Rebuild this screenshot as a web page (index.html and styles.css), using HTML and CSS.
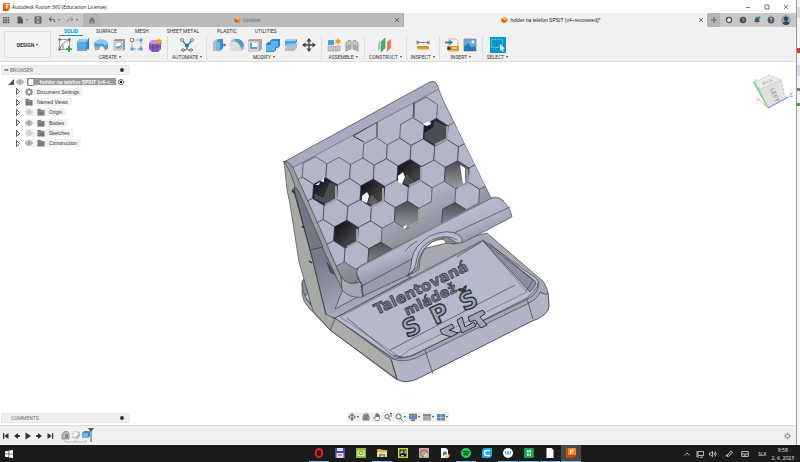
FILE: index.html
```html
<!DOCTYPE html>
<html lang="en">
<head>
    <meta charset="UTF-8">
    <meta name="viewport" content="width=device-width, initial-scale=1.0">
    <title>Autodesk Fusion 360 (Education License)</title>
    <link rel="stylesheet" href="styles.css">
</head>
<body>
    <div class="desktop">
        <div class="app">
            <header class="titlebar">
                <svg class="app-logo" viewBox="0 0 7 8"><path d="M0 1l1-1h5v7l-1 1H0z" fill="#d9480f"/><path d="M1 0h6v6H1z" fill="#f47b20"/><path d="M3 1.500h3M3.500 1.500v4M3 3.300h2" stroke="#fff" fill="none"/></svg>
                <h1>Autodesk Fusion 360 (Education License)</h1>
                <div class="window-buttons">
                    <button aria-label="Minimize"><svg viewBox="0 0 6 6"><path d="M1 3.500h4"/></svg></button>
                    <button aria-label="Maximize"><svg viewBox="0 0 6 6"><path d="M1 1h4v4H1z"/></svg></button>
                    <button aria-label="Close"><svg viewBox="0 0 6 6"><path d="M1 1l4 4M5 1L1 5"/></svg></button>
                </div>
            </header>

            <!-- Quick access and document tabs -->
            <nav class="doc-bar">
                <div class="quick">
                    <button aria-label="Data panel"><svg viewBox="0 0 8 8" fill="#555"><path d="M1 1h1.600v1.600H1zM3.300 1h1.600v1.600H3.300zM5.600 1h1.600v1.600H5.600zM1 3.300h1.600v1.600H1zM3.300 3.300h1.600v1.600H3.300zM5.600 3.300h1.600v1.600H5.600zM1 5.600h1.600v1.600H1zM3.300 5.600h1.600v1.600H3.300zM5.600 5.600h1.600v1.600H5.600z"/></svg></button>
                    <button class="drop" aria-label="File"><svg viewBox="0 0 8 8"><path d="M1.500.5H5L7 2.500v5H1.500z" fill="#555"/><path d="M5 .5v2h2" stroke="#bbb" stroke-width=".5" fill="none"/></svg></button>
                    <button aria-label="Save"><svg viewBox="0 0 8 8"><path d="M1 1h6v6H1z" fill="#888" stroke="#555"/><path d="M2.500 1h3v2h-3zM2.500 5h3v2h-3z" fill="#ccc" stroke="#555" stroke-width=".5"/></svg></button>
                    <button class="drop" aria-label="Undo"><svg viewBox="0 0 8 8"><path d="M3.500 1L1 3.300l2.500 2.200M1 3.300h3.500q2.500 0 2.500 3" fill="none" stroke="#555"/></svg></button>
                    <button class="drop" aria-label="Redo"><svg viewBox="0 0 8 8"><path d="M4.500 1L7 3.300 4.500 5.500M7 3.300H3.500Q1 3.300 1 6.300" fill="none" stroke="#888" stroke-width=".8"/></svg></button>
                </div>
                <a class="home" href="#" aria-label="Home"><svg viewBox="0 0 8 8"><path d="M4 1L.5 4.500h1V7.500h2V5h1v2.500h2v-3h1z" fill="#777"/></svg></a>
                <div class="doc-tab">
                    <a href="#"><svg viewBox="0 0 8 8"><path d="M4 .5l3.400 1.700v3.600L4 7.500.6 5.800V2.200z" fill="#f58220"/><path d="M.6 2.200L4 4v3.500L.6 5.800z" fill="#d95e0b"/><path d="M.6 2.200L4 .5l3.400 1.700L4 4z" fill="#ffb071"/></svg>Untitled</a>
                    <button aria-label="Close tab"><svg viewBox="0 0 6 6"><path d="M1 1l4 4M5 1L1 5"/></svg></button>
                </div>
                <div class="doc-tab current">
                    <a href="#"><svg viewBox="0 0 8 8"><path d="M4 .5l3.400 1.700v3.600L4 7.500.6 5.800V2.200z" fill="#f58220"/><path d="M.6 2.200L4 4v3.500L.6 5.800z" fill="#d95e0b"/><path d="M.6 2.200L4 .5l3.400 1.700L4 4z" fill="#ffb071"/></svg>holder na telefon SPSIT (v4~recovered)*</a>
                    <button aria-label="Close tab"><svg viewBox="0 0 6 6"><path d="M1 1l4 4M5 1L1 5"/></svg></button>
                </div>
                <button class="add-tab" aria-label="New design"><svg viewBox="0 0 8 8"><path d="M4 1v6M1 4h6" stroke="#666"/></svg></button>
                <div class="doc-tools">
                    <button aria-label="Extensions"><svg viewBox="0 0 8 8"><circle cx="4" cy="4" r="2.600" fill="#eee" stroke="#555" stroke-width="1.200"/><path d="M1 1.500l2.500.3-1.500 2z" fill="#555"/></svg></button>
                    <button aria-label="Job status"><svg viewBox="0 0 8 8"><circle cx="4" cy="4" r="3.300" fill="#555"/><path d="M4 2v2.300h1.600" fill="none" stroke="#bbb" stroke-width=".7"/></svg></button>
                    <button aria-label="Notifications"><svg viewBox="0 0 8 8"><path d="M1 6q1-1 1-3 .3-2 2-2 1.800 0 2 2 0 2 1 3zM3 6.500h2L4 7.500z" fill="#555"/><circle cx="6" cy="1.800" r="1.500" fill="#1792d2"/></svg></button>
                    <button aria-label="Help"><svg viewBox="0 0 8 8"><circle cx="4" cy="4" r="3.400" fill="#555"/><path d="M2.900 3.100Q3 2 4 2t1.100 1Q5.100 3.600 4 4.200v.6M4 5.300v.8" fill="none" stroke="#eee" stroke-width=".8"/></svg></button>
                    <button aria-label="Account"><svg viewBox="0 0 10 10"><circle cx="5" cy="5" r="5" fill="#91a8c4"/><circle cx="5" cy="3.800" r="2.300" fill="#34415a"/><path d="M1.500 8.500Q2 6.500 5 6.300t3.500 2.200Q5 11.500 1.500 8.500z" fill="#34415a"/></svg></button>
                </div>
            </nav>

            <!-- Ribbon -->
            <section class="ribbon">
                <button class="workspace drop">DESIGN</button>
                <div class="ribbon-main">
                    <nav class="ribbon-tabs">
                        <a class="active" href="#">SOLID</a>
                        <a href="#">SURFACE</a>
                        <a href="#">MESH</a>
                        <a href="#">SHEET METAL</a>
                        <a href="#">PLASTIC</a>
                        <a href="#">UTILITIES</a>
                    </nav>
                    <div class="groups">
                        <div class="group">
                            <div class="tools">
                                <button aria-label="Create sketch"><svg viewBox="0 0 14 14"><path d="M1.500 1.500h10v10h-10z" fill="#fff" stroke="#777" stroke-width=".7"/><path d="M2 11Q3 5 11 2M5 11V6.500" fill="none" stroke="#777"/><path d="M.5.5h2v2h-2zM10.500.5h2v2h-2zM.5 10.500h2v2h-2z" fill="#555"/><path d="M11 8v6M8 11h6" stroke="#16a34a" stroke-width="1.700"/></svg></button>
                                <button aria-label="Extrude"><svg viewBox="0 0 14 14"><path d="M1 4l3-3h9v9l-3 3H1z" fill="#3a8fd1"/><path d="M1 4h9v9H1z" fill="#5ba9e4"/><path d="M1 4l3-3h9l-3 3z" fill="#8fcaf3"/><path d="M1 11.500h9v1.500H1z" fill="#999"/><path d="M12.500 0v12" stroke="#555" stroke-width=".5"/></svg></button>
                                <button aria-label="Revolve"><svg viewBox="0 0 14 14"><path d="M0 5q3-4 8-3.500 5 .5 6 4v5l-3 2q-1-5-5-4l-1 3.500H1z" fill="#4a9cda"/><path d="M0 5q3-4 8-3.500 5 .5 6 4l-2.500 2Q9 4.500 5.500 6z" fill="#8cc8f2"/><path d="M1 9l4-.8v3.600l-4 1z" fill="#aaa"/></svg></button>
                                <button aria-label="Hole"><svg viewBox="0 0 14 14"><path d="M1 3l2-2h10v10l-2 2H1z" fill="#999"/><path d="M1 3h10v10H1z" fill="#d5d5d5"/><circle cx="6.500" cy="7.500" r="3.700" fill="#fff" stroke="#888" stroke-width=".7"/><path d="M3.500 8.500a3.200 3.200 0 105.500-3.200q.5 3.700-5.500 3.200z" fill="#4d9fdb"/></svg></button>
                                <button aria-label="Rectangular pattern"><svg viewBox="0 0 14 14"><path d="M2 2h9M2 2v9M11 3v8M3 11h8" stroke="#777" stroke-width=".7" stroke-dasharray="3 1"/><path d="M.5.5h3v3h-3z" fill="#fff" stroke="#555" stroke-width=".6"/><path d="M9.500.5h3v3h-3zM.5 9.500h3v3h-3zM9.500 9.500h3v3h-3z" fill="#4d9fdb"/></svg></button>
                                <button aria-label="Create form"><svg viewBox="0 0 14 14"><path d="M1 5l3-3h7l2 3v6l-3 3H4l-3-3z" fill="#8a5bc4"/><path d="M1 5l3-3h6l2 2-3 2H2z" fill="#b694e2"/><path d="M1 9h8l4-1M5 5.500V13M9 5.500V13" stroke="#56318a" stroke-width=".6" fill="none"/><path d="M11 0l1 2 2.500-.5L13 3.500l1.500 2L12 5l-1 2-1-2-2.500.5 1.500-2-1.500-2 2.500.5z" fill="#f59a1d"/></svg></button>
                            </div>
                            <button class="label drop">CREATE</button>
                        </div>
                        <div class="group">
                            <div class="tools">
                                <button aria-label="Automated modeling"><svg viewBox="0 0 14 14"><path d="M2 2l5 6 5-6M7 8v4M1 12h5M13 12H8" stroke="#4d8fc4" stroke-width="1.500" fill="none"/><g fill="#fff" stroke="#555" stroke-width=".8"><circle cx="2" cy="2" r="1.500"/><circle cx="12" cy="2" r="1.500"/><circle cx="3" cy="12" r="1.300"/><circle cx="11" cy="12" r="1.300"/></g><circle cx="7" cy="7.500" r="2" fill="#277ab8"/></svg></button>
                            </div>
                            <button class="label drop">AUTOMATE</button>
                        </div>
                        <div class="group">
                            <div class="tools">
                                <button aria-label="Press pull"><svg viewBox="0 0 14 14"><path d="M1 4l3-3h3v9l-3 3H1z" fill="#bbb"/><path d="M4 4l3-3h4v9l-3 3H4z" fill="#3a8fd1"/><path d="M4 4h4v9H4z" fill="#73b9eb"/><path d="M10 7h3M12 5.500L13.500 7 12 8.500" stroke="#444" fill="none"/></svg></button>
                                <button aria-label="Fillet"><svg viewBox="0 0 14 14"><path d="M0 4l3-3h5q6 2 6 8v2l-3 2H0z" fill="#b8b8b8"/><path d="M0 4h5q5 2 6 7v2H0z" fill="#dcdcdc"/><path d="M5 1h4q5 2 5 7l-3 2Q10 5 5 3z" fill="#4d9fdb"/></svg></button>
                                <button aria-label="Shell"><svg viewBox="0 0 14 14"><path d="M0 3l2-2h12v10l-2 2H0z" fill="#aaa"/><path d="M0 3h11v10H0z" fill="#ddd" stroke="#888" stroke-width=".5"/><path d="M2 5h7v6H2z" fill="#4d9fdb"/><path d="M4 5h5v4H4z" fill="#fff"/></svg></button>
                                <button aria-label="Combine"><svg viewBox="0 0 14 14"><path d="M4 3l2-2h8v7l-2 2h-2v2l-2 2H0V6l2-2h2z" fill="#3486c7"/><path d="M5 3h7v6H9v4H0V7h5z" fill="#68b1e8"/></svg></button>
                                <button aria-label="Split body"><svg viewBox="0 0 14 14"><path d="M1 3l2-2h10v3l-2 3H1z" fill="#4d9fdb"/><path d="M1 3l2-2h10l-2 2z" fill="#9ed1f5"/><path d="M1 10l3-3h9v3l-3 3H1z" fill="#bbb"/><path d="M0 8.500L4 5.500h10l-3 3z" fill="#8bc6f1"/></svg></button>
                                <button aria-label="Move"><svg viewBox="0 0 14 14"><path d="M7 1v12M1 7h12" stroke="#444" stroke-width="1.300"/><path d="M7 0l2.500 3.500h-5zM7 14l2.500-3.500h-5zM0 7l3.500 2.500v-5zM14 7l-3.500 2.500v-5z" fill="#444"/></svg></button>
                            </div>
                            <button class="label drop">MODIFY</button>
                        </div>
                        <div class="group">
                            <div class="tools">
                                <button aria-label="New component"><svg viewBox="0 0 14 14"><path d="M1 2h6v5H1z" fill="#4d9fdb"/><path d="M1 8h6v5H1zM8 8h5v5H8z" fill="#c4c4c4" stroke="#888" stroke-width=".5"/><path d="M11 0l1 2 2-.5L13 3.500l1 2L12 5l-1 2-1-2-2.500.5 1.500-2-1.500-2 2.500.5z" fill="#f59a1d"/></svg></button>
                                <button aria-label="Joint"><svg viewBox="0 0 14 14"><path d="M1 13V5l3-3q2 0 2 2v7l-2 1V7L3 8v4zM13 13V5l-3-3Q8 2 8 4v7l2 1V7l1 1v4z" fill="#c9c9c9" stroke="#777" stroke-width=".7"/></svg></button>
                            </div>
                            <button class="label drop">ASSEMBLE</button>
                        </div>
                        <div class="group">
                            <div class="tools">
                                <button aria-label="Offset plane"><svg viewBox="0 0 14 14"><path d="M0 5l2-2v8l-2 2z" fill="#bbb"/><path d="M3 4l4-4v10l-4 4z" fill="#41b06a" stroke="#2c8e4f" stroke-width=".5"/><path d="M9 4l4-3v9l-4 4z" fill="#e08546"/></svg></button>
                            </div>
                            <button class="label drop">CONSTRUCT</button>
                        </div>
                        <div class="group">
                            <div class="tools">
                                <button aria-label="Measure"><svg viewBox="0 0 14 14"><path d="M1 2.500v4M13 2.500v4M2 4.500h10M3 3L1.500 4.500 3 6M11 3l1.500 1.500L11 6" stroke="#555" stroke-width=".7" fill="none"/><path d="M1 8h12v3.500H1z" fill="#e4a23a"/><path d="M3 8v1.500M5 8v1.500M7 8v1.500M9 8v1.500M11 8v1.500" stroke="#875b14" stroke-width=".5"/></svg></button>
                            </div>
                            <button class="label drop">INSPECT</button>
                        </div>
                        <div class="group">
                            <div class="tools">
                                <button aria-label="Insert derive"><svg viewBox="0 0 14 14"><path d="M4 1h7l2 2v10H4z" fill="#fff" stroke="#c9973d" stroke-width=".7"/><path d="M2 8h12v4.500H2z" fill="#d6952c"/><circle cx="4" cy="10.200" r="1.500" fill="#3c3020"/><path d="M7 10h5" stroke="#fff"/><path d="M0 4.500h5" stroke="#217fc4" stroke-width="1.800"/><path d="M4.500 1.800L8 4.500 4.500 7.200z" fill="#217fc4"/></svg></button>
                                <button aria-label="Canvas"><svg viewBox="0 0 14 14"><path d="M1 1h12v12H1z" fill="#63ace0" stroke="#777" stroke-width=".6"/><path d="M1 13V9l4-4 4 5 2-2 2 2v3z" fill="#2c77b3"/><circle cx="10" cy="4" r="1.500" fill="#fff"/></svg></button>
                            </div>
                            <button class="label drop">INSERT</button>
                        </div>
                        <div class="group">
                            <div class="tools">
                                <button class="select-tool" aria-label="Select"><svg viewBox="0 0 16 16"><path d="M1.500 2.500h11v8h-11z" fill="none" stroke="#8de07d" stroke-width=".8" stroke-dasharray="2 1"/><path d="M10 7v7l1.600-1.500 1 2.300 1.200-.6-1-2.200H15z" fill="#fff"/></svg></button>
                            </div>
                            <button class="label drop">SELECT</button>
                        </div>
                    </div>
                </div>
            </section>

            <!-- Modeling canvas -->
            <main class="canvas">
                <svg class="model" viewBox="280 78 275 306" role="img" aria-label="Phone holder model">
                    <defs>
                        <path id="hex" d="M12.300-6.600L.9-13.900-11.400-7.300-12.300 6.600-.9 13.900 11.400 7.300z"/>
                        <clipPath id="plate"><path d="M291.500 168L439 89l4 12 49 99L362 267l-8 20-12-8-24-54z"/></clipPath>
                        <linearGradient id="hole" x1="0" y1="0" x2="1" y2="1"><stop stop-color="#0b0b0e"/><stop offset="1" stop-color="#55575f"/></linearGradient>
                        <linearGradient id="hole-soft" x1="0" y1="0" x2="0" y2="1"><stop stop-color="#4a4b52"/><stop offset="1" stop-color="#9b9daa"/></linearGradient>
                        <linearGradient id="face" x1="330" y1="110" x2="400" y2="255" gradientUnits="userSpaceOnUse"><stop offset=".7" stop-color="#b3b6c9"/><stop offset="1" stop-color="#85878f"/></linearGradient>
                        <linearGradient id="inside" x1="295" y1="200" x2="350" y2="310" gradientUnits="userSpaceOnUse"><stop stop-color="#8a8c9b"/><stop offset=".5" stop-color="#777988"/><stop offset="1" stop-color="#a8aabd"/></linearGradient>
                        <linearGradient id="lip" x1="430" y1="225" x2="440" y2="250" gradientUnits="userSpaceOnUse"><stop stop-color="#b9bccd"/><stop offset=".6" stop-color="#afb2c6"/><stop offset="1" stop-color="#9a9cad"/></linearGradient>
                    </defs>
                    <g stroke="#30323a" stroke-width=".6" stroke-linejoin="round">
                        <!-- base -->
                        <path d="M302 283q1-6 10-7l10-2 165-41 51 44q8 5 10 16l1 13q0 9-19 16l-109 55q-14 8-25 2L330 330l-21-22q-6-6-7-14z" fill="#a6a8b2"/>
                        <path d="M302 283q1-6 10-7l16 35-6 8-15-19q-5-8-5-17z" fill="#8f919f"/>
                        <path d="M305 297q2-7 15-10l7 27-5 3z" fill="#b5b8c9"/>
                        <path d="M312 277l5 11M306 281l7 9" fill="none"/>
                        <path d="M335 318l58 41q10 4 23-1l111-54q12-6 13-12 7 4 8 1l1 13q0 9-19 16l-109 55q-14 8-25 2L330 330z" fill="#b1b4c6"/>
                        <path d="M335 318l56 41 6 20-67-49-7-12z" fill="#abada9"/>
                        <path d="M335 318L483 240l54 39q6 5-10 19L420 352q-14 8-27 6z" fill="#b9bccc"/>
                        <path d="M340 317L483 241l44 51-118 58-9 7z" fill="#b6b9cb" stroke-width=".4"/>
                        <path d="M483 241l52 40q3 3-5 11z" fill="#8d8f9b"/>
                        <path d="M489 243l44 37-7 11" fill="none"/>
                        <path d="M390 350l125-65M335 309l62-32M457 257l24-15M527 299l6 20M425 350l8 24M391 359l6 20" fill="none"/>
                        <path d="M347 318l45 37 10 2M393 356q11 4 24-3l109-53q14-7 12-17" fill="none"/>

                        <!-- embossed lettering -->
                        <g class="lettering">
                            <text class="line-one" transform="translate(377 315) rotate(-26)">Talentovaná</text>
                            <text class="line-two" transform="translate(407 316) rotate(-26)">mládež</text>
                            <text class="big" transform="translate(407 338) rotate(-25)" x="0 31 63">SPŠ</text>
                        </g>
                        <path d="M440 330l12-6 2 4-5 2 9 3-7 4-9-3zM457 320l5-3 3 10 9-5 2 4-14 7zM468 317l15-7 2 4-5 3 7 8-6 3-6-8-5 2z" fill="#a1a4b6" stroke-width="1"/>

                        <!-- inner side of the stand -->
                        <path d="M293 187L349 284l52-10 10 3-76 41-11-2z" fill="url(#inside)"/>
                        <path d="M335 309l62-33-34 18-18-10z" fill="#aeb1c3"/>
                        <path d="M327 262l9 13-6-3z" fill="#515461"/>

                        <!-- back plate -->
                        <path d="M284 162L430 82q5-2 7 3l6 15 49 100-130 72-9 15-9-4-59-122z" fill="url(#face)"/>
                        <path d="M284 162L430 82q5-2 7 3l2 4-147 79z" fill="#a9acc0" stroke-width=".4"/>
                        <g clip-path="url(#plate)">
                            <g fill="#b3b6c9">
                                <use href="#hex" x="425.200" y="111.100"/>
                                <use href="#hex" x="412" y="131.600"/><use href="#hex" x="459.400" y="133"/>
                                <use href="#hex" x="375.100" y="151.400"/><use href="#hex" x="398.800" y="152.100"/><use href="#hex" x="422.500" y="152.800"/><use href="#hex" x="446.200" y="153.500"/><use href="#hex" x="469.900" y="154.200"/>
                                <use href="#hex" x="314.500" y="170.500"/><use href="#hex" x="338.200" y="171.200"/><use href="#hex" x="361.900" y="171.900"/><use href="#hex" x="385.600" y="172.600"/><use href="#hex" x="433" y="174"/><use href="#hex" x="480.400" y="175.400"/>
                                <use href="#hex" x="301.300" y="191"/><use href="#hex" x="348.700" y="192.400"/><use href="#hex" x="396.100" y="193.800"/><use href="#hex" x="419.800" y="194.500"/><use href="#hex" x="467.200" y="195.900"/>
                                <use href="#hex" x="311.800" y="212.200"/><use href="#hex" x="335.500" y="212.900"/><use href="#hex" x="359.200" y="213.600"/><use href="#hex" x="382.900" y="214.300"/>
                                <use href="#hex" x="322.300" y="233.400"/><use href="#hex" x="369.700" y="234.800"/>
                                <use href="#hex" x="332.800" y="254.600"/><use href="#hex" x="356.500" y="255.300"/>
                            </g>
                            <g fill="url(#hole)">
                                <use href="#hex" x="435.700" y="132.300"/><use href="#hex" x="409.300" y="173.300"/><use href="#hex" x="325" y="191.700"/><use href="#hex" x="372.400" y="193.100"/><use href="#hex" x="346" y="234.100"/>
                            </g>
                            <g fill="url(#hole-soft)">
                                <use href="#hex" x="456.700" y="174.700"/><use href="#hex" x="406.600" y="215"/><use href="#hex" x="454" y="216.400"/><use href="#hex" x="380.200" y="256"/>
                            </g>
                            <!-- walls seen through the openings -->
                            <path d="M314 193l9 4 6-15 8 2v13l-12 7-11-5zM424 133l9-6 1-7 13 6v13l-12 6-11-6zM403 184l3-11 9 8-6 5z" fill="#4b4d55" stroke="#17181c"/>
                            <path d="M367 203l4-9 8 7-6 5z" fill="#5d606a" stroke="#17181c"/>
                            <g stroke="none" fill="#fff">
                                <path d="M423 124l7-3 1 3-4 2-3-1zM315 185l5-3-1 3zM320 181l4-3v4zM398 176l5-4 2 5-3 7-4-2zM362 196l5-4 2 4-2 7-5-2zM460 165l5 3v15l-2 1zM403 227l4-2-2 4z"/>
                            </g>
                            <g fill="none" stroke="#a19f99" stroke-width="2">
                                <path d="M447 126v13l-12 6M421 167v13l-12 6M336 186v13l-11 6M383 188v13l-12 6M357 229v13l-10 5M467 169l1 14-10 4M419 209v12l-10 6"/>
                            </g>
                            <path d="M353 136l11 6M377 122v15M353 136l24-14M414 102v15" fill="none" stroke-width="1"/>
                        </g>

                        <!-- side arm and plate rim -->
                        <path d="M284 161q6 1 9 7l26 58 21 49q5 9 11 9l6-1q3 6 6 13-15 2-21-7l-42-89-8-15z" fill="#9a9b9b"/>
                        <path d="M284 161l6 11 5 14-1 5 16 58 16 65 9 5-5 11-17-19-14-49-9-58-3-14z" fill="#a7a9a5"/>
                        <path d="M294 188q2-2 5 4l24 55-13 3z" fill="#747786"/>
                        <path d="M293 188l17 62 16 65" fill="none"/>
                        <path d="M292 190l2 3M302 226l2 2M309 261l3 2" stroke-width="1.500"/>

                        <!-- holding lip with the cable cut-out -->
                        <path d="M341 277q6 8 15 6l11-3-4 17q-13 2-21-7z" fill="#a5a7b2"/>
                        <path d="M357 275q-1-7 5-10L490 199q7-3 13 2 7 6 9 16l-48 25-12 2q-8-8-20-2-13 8-13 27l-6 4-50 23q-3-6-1-10z" fill="url(#lip)"/>
                        <path d="M359 268L490 198q8-3 14 3" fill="none" stroke="#94958f" stroke-width="1"/>
                        <path d="M360 287l52-28M454 233l56-26M357 275q2 6 5 9l1 12" fill="none"/>
                        <path d="M408 275q3-6 4-17 2-12 18-22 18-8 29-1 4 3 3 8-6 1-10-3-12-5-23 4-10 8-12 23z" fill="#b8bbcb"/>
                        <path d="M407 276q8-3 10-18 3-13 17-19 14-5 23 1M417 241q-6 3-12 10" fill="none"/>
                        <path d="M442 237q9-1 13 7l-9-1z" fill="#898b91" stroke-width=".4"/>
                    </g>
                </svg>

                <svg class="view-cube" viewBox="0 0 44 38" role="img" aria-label="View cube">
                    <path d="M2 9l16-8 12 5-20 9z" fill="#ececec"/>
                    <path d="M2 9l8 6 7 19z" fill="#d2d2d2"/>
                    <path d="M10 15l20-9 4 17-17 11z" fill="#e0e0e0"/>
                    <path d="M2 9l16-8 12 5-20 9M30 6l4 17" fill="none" stroke="#aaa" stroke-width=".6" stroke-dasharray="3 1"/>
                    <path d="M3 8l14 26" stroke="#60dc6b" stroke-width="1.300"/>
                    <path d="M17 34l20-11" stroke="#8080f0" stroke-width="1.200"/>
                    <path d="M17 34L7 25" stroke="#f2aaa9"/>
                    <text class="cube-face" transform="translate(19 15) rotate(68)">LEFT</text>
                    <text class="cube-small" transform="translate(12 11) rotate(-22)">BACK</text>
                    <text class="axis-x" x="5" y="27">X</text>
                    <text class="axis-z" x="38" y="23">Z</text>
                    <text class="axis-y" x="3" y="9">Y</text>
                </svg>

                <aside class="side">
                    <section>
                        <div class="panel-head"><span aria-hidden="true">◂◂</span><h2>BROWSER</h2><button class="dot" aria-label="Panel options"></button></div>
                        <ul class="tree">
                            <li class="root"><i class="corner"></i><span class="item"><svg class="eye" viewBox="0 0 8 6"><path d="M.5 3q3.500-4.500 7 0-3.500 4.500-7 0z"/><circle cx="4" cy="3" r="1"/></svg><span class="doc-name"><svg viewBox="0 0 8 8"><path d="M1 1.500L2.500.5H7v6l-1.500 1H1z" fill="#fff" stroke="#777"/></svg>holder na telefon SPSIT (v4~r...</span></span><input type="radio" name="active" aria-label="Activate component" checked></li>
                            <li><button class="expand" aria-label="Expand"><svg viewBox="0 0 4 7"><path d="M.5.5l3 3-3 3z"/></svg></button><span class="item"><svg viewBox="0 0 8 8"><circle cx="4" cy="4" r="2.300" fill="none" stroke="#777" stroke-width="1.300"/><path d="M4 0v1.500M4 6.500V8M0 4h1.500M6.500 4H8M1.200 1.200l1 1M5.800 5.800l1 1M6.800 1.200l-1 1M2.200 5.800l-1 1" stroke="#777"/></svg>Document Settings</span></li>
                            <li><button class="expand" aria-label="Expand"><svg viewBox="0 0 4 7"><path d="M.5.5l3 3-3 3z"/></svg></button><span class="item"><svg viewBox="0 0 8 8"><path d="M.5 1h3l1 1h3v5.500h-7z" fill="#777"/><path d="M.5 3h7" stroke="#bbb" stroke-width=".5"/></svg>Named Views</span></li>
                            <li><button class="expand" aria-label="Expand"><svg viewBox="0 0 4 7"><path d="M.5.5l3 3-3 3z"/></svg></button><span class="item"><svg class="eye off" viewBox="0 0 8 6"><path d="M.5 3q3.500-4.500 7 0-3.500 4.500-7 0z"/><circle cx="4" cy="3" r="1"/></svg><svg viewBox="0 0 8 8"><path d="M.5 1h3l1 1h3v5.500h-7z" fill="#777"/><path d="M.5 3h7" stroke="#bbb" stroke-width=".5"/></svg>Origin</span></li>
                            <li><button class="expand" aria-label="Expand"><svg viewBox="0 0 4 7"><path d="M.5.5l3 3-3 3z"/></svg></button><span class="item"><svg class="eye" viewBox="0 0 8 6"><path d="M.5 3q3.500-4.500 7 0-3.500 4.500-7 0z"/><circle cx="4" cy="3" r="1"/></svg><svg viewBox="0 0 8 8"><path d="M.5 1h3l1 1h3v5.500h-7z" fill="#777"/><path d="M.5 3h7" stroke="#bbb" stroke-width=".5"/></svg>Bodies</span></li>
                            <li><button class="expand" aria-label="Expand"><svg viewBox="0 0 4 7"><path d="M.5.5l3 3-3 3z"/></svg></button><span class="item"><svg class="eye off" viewBox="0 0 8 6"><path d="M.5 3q3.500-4.500 7 0-3.500 4.500-7 0z"/><circle cx="4" cy="3" r="1"/></svg><svg viewBox="0 0 8 8"><path d="M.5 1h3l1 1h3v5.500h-7z" fill="#777"/><path d="M.5 3h7" stroke="#bbb" stroke-width=".5"/></svg>Sketches</span></li>
                            <li><button class="expand" aria-label="Expand"><svg viewBox="0 0 4 7"><path d="M.5.5l3 3-3 3z"/></svg></button><span class="item"><svg class="eye" viewBox="0 0 8 6"><path d="M.5 3q3.500-4.500 7 0-3.500 4.500-7 0z"/><circle cx="4" cy="3" r="1"/></svg><svg viewBox="0 0 8 8"><path d="M.5 1h3l1 1h3v5.500h-7z" fill="#777"/><path d="M.5 3h7" stroke="#bbb" stroke-width=".5"/></svg>Construction</span></li>
                        </ul>
                    </section>
                    <div class="panel-head comments"><h2>COMMENTS</h2><button class="dot" aria-label="Comment options"></button></div>
                </aside>

                <div class="nav-bar">
                    <button class="drop" aria-label="Orbit"><svg viewBox="0 0 8 8"><path d="M4 0l2 2-2 2-2-2zM4 4l2 2-2 2-2-2zM0 4l2-2v4zM8 4L6 2v4z" fill="#777"/><circle cx="4" cy="4" r="1.500" fill="#6ba6cf"/></svg></button>
                    <button aria-label="Look at"><svg viewBox="0 0 8 8"><path d="M1 3h6v4H1zM2 1h4v2H2z" fill="#bbb" stroke="#666" stroke-width=".8"/><path d="M3 4v2h2V4" stroke="#555" fill="none"/></svg></button>
                    <button aria-label="Pan"><svg viewBox="0 0 8 8"><path d="M2.500 7.500L.7 4.500l.8-.5L2.500 5V1.500h1V4 .7h1V4 1h1v3-2h1v3.500l-1 2z" fill="#fff" stroke="#555" stroke-width=".6"/></svg></button>
                    <button aria-label="Zoom"><svg viewBox="0 0 8 8"><circle cx="3" cy="3.500" r="2" fill="#eee" stroke="#666"/><path d="M4.500 5l2 2.500M7 0v4M6 1l1-1 1 1" stroke="#666" fill="none"/></svg></button>
                    <button class="drop" aria-label="Fit"><svg viewBox="0 0 8 8"><circle cx="3.500" cy="3.500" r="2.500" fill="#eee" stroke="#666"/><path d="M5.500 5.500l2 2" stroke="#555"/></svg></button>
                    <button class="drop" aria-label="Display settings"><svg viewBox="0 0 8 8"><path d="M0 1h8v5H0z" fill="#668fb5" stroke="#777" stroke-width=".6"/><path d="M3 6h2v1.500H2h4" stroke="#777" fill="none"/></svg></button>
                    <button class="drop" aria-label="Background"><svg viewBox="0 0 8 8"><path d="M0 1h8v6.500H0z" fill="#aaa"/><path d="M0 1h8v2H0z" fill="#888"/></svg></button>
                    <button class="drop" aria-label="Viewports"><svg viewBox="0 0 8 8"><path d="M0 1h3.700v3H0zM4.300 1H8v3H4.300zM0 4.500h3.700v3H0zM4.300 4.500H8v3H4.300z" fill="#5884ad"/></svg></button>
                </div>
            </main>

            <!-- Timeline -->
            <footer class="timeline">
                <div class="playback">
                    <button aria-label="Go to start"><svg viewBox="0 0 8 8"><path d="M1 1h1.200v6H1zM6.500 1v6L2.200 4z"/></svg></button>
                    <button aria-label="Step back"><svg viewBox="0 0 8 8"><path d="M5 1v6L1 4zM5 3h1.800v2H5z"/></svg></button>
                    <button aria-label="Play"><svg viewBox="0 0 8 8"><path d="M1.500.5v7L7 4z"/></svg></button>
                    <button aria-label="Step forward"><svg viewBox="0 0 8 8"><path d="M3 1v6l4-3zM1.200 3H3v2H1.200z"/></svg></button>
                    <button aria-label="Go to end"><svg viewBox="0 0 8 8"><path d="M6 1h1.200v6H6zM1.500 1v6l4.300-3z"/></svg></button>
                </div>
                <svg class="features" viewBox="0 0 38 16"><path d="M2 7l2-3q3-2 5 1v6H2z" fill="#b9bcc2" stroke="#666" stroke-width=".6"/><path d="M5 6h3v4H5z" fill="#888"/><path d="M13 4h6v6h-6z" fill="#fff" stroke="#5aa3d8" stroke-width=".8" stroke-dasharray="2 1"/><path d="M16 10l4-4" stroke="#e8902f" stroke-width="1.500"/><path d="M22 5l2-2h6v5l-2 2h-6z" fill="#3b8ccd"/><path d="M22 5h6v5h-6z" fill="#6eb3e6"/><path d="M5 12v2h21v-2M15.500 12v2" fill="none" stroke="#bbb"/><path d="M28 0h6l-2.500 3.500V14h-1V3.500z" fill="#555"/></svg>
                <button class="settings" aria-label="Timeline settings"><svg viewBox="0 0 8 8"><circle cx="4" cy="4" r="2.200" fill="none" stroke="#888" stroke-width="1.200"/><path d="M4 0v1.500M4 6.500V8M0 4h1.500M6.500 4H8M1.200 1.200l1 1M5.800 5.800l1 1M6.800 1.200l-1 1M2.200 5.800l-1 1" stroke="#888"/></svg></button>
            </footer>
        </div>
        <!-- edge of the window behind -->
        <div class="behind"><i></i><i class="red"></i><i></i><i class="green"></i><i class="green"></i></div>
    </div>

    <div class="taskbar">
        <button class="start" aria-label="Start"><svg viewBox="0 0 8 8"><path d="M0 1.200L3.600.7v3H0zM4.200.6L8 0v3.700H4.200zM0 4.300h3.600v3L0 6.800zM4.200 4.300H8V8l-3.800-.6z" fill="#fff"/></svg></button>
        <div class="apps">
            <button class="open" aria-label="Opera"><svg viewBox="0 0 10 10"><ellipse cx="5" cy="5" rx="3.300" ry="3.900" fill="none" stroke="#f0202f" stroke-width="2"/></svg></button>
            <button aria-label="Total Commander"><svg viewBox="0 0 10 10"><path d="M0 0h10v10H0z" fill="#3c48c8"/><path d="M2 0h6v3H2z" fill="#ddd"/><path d="M1.500 5h7v5h-7z" fill="#eed5e6"/><path d="M3 7h4" stroke="#c33" /></svg></button>
            <button aria-label="Camtasia"><svg viewBox="0 0 10 10"><path d="M0 0h10v10H0z" fill="#8cb83c"/><path d="M1.500 2.500h7v5.500h-7z" fill="#dcebb9"/><circle cx="5" cy="5" r="1.800" fill="none" stroke="#6c962b"/></svg></button>
            <button class="open" aria-label="File Explorer"><svg viewBox="0 0 10 10"><path d="M0 1h4l1 1h5v7H0z" fill="#e8b63d"/><path d="M0 4h10v5H0z" fill="#fbdc7b"/><path d="M2 6h6v3H6.500V7.500h-3V9H2z" fill="#3d93d8"/></svg></button>
            <button aria-label="PyCharm"><svg viewBox="0 0 10 10"><path d="M0 0h10v10H0z" fill="#b8e336"/><path d="M1.500 1.500h7v7h-7z" fill="#111"/><path d="M3 6V3h2v1.500H3M6 3h2v2H6M3 7.500h3" fill="none" stroke="#fff" stroke-width=".7"/></svg></button>
            <button aria-label="Chrome"><svg viewBox="0 0 10 10"><path d="M0 0h10v10H0z" fill="#a8b4bb"/><circle cx="5" cy="5.500" r="4" fill="#ef5545"/><path d="M1 5.500A4 4 0 005 9.500l2-4z" fill="#52b35d"/><path d="M5 9.500a4 4 0 004-4l-4-1z" fill="#f6d046"/><circle cx="5" cy="5.500" r="1.700" fill="#4a8df0" stroke="#fff" stroke-width=".7"/></svg></button>
            <button aria-label="Python file"><svg viewBox="0 0 10 10"><path d="M1 0h5l2 2v8H1z" fill="#f4f4f4"/><path d="M3 5q0-1.500 2-1.500t2 2v1H5q-1 0-1 1H3z" fill="#3d78ad"/><path d="M9.500 6v2q0 2-2.500 2t-2-2.500h2q1.500 0 1.500-1.500z" fill="#f6cf46"/></svg></button>
            <button class="open" aria-label="Spotify"><svg viewBox="0 0 10 10"><circle cx="5" cy="5" r="5" fill="#1ed760"/><path d="M2 3.600q3.500-1 6.500.5M2.300 5.300q3-.8 5.500.5M2.500 6.900q2.500-.6 4.500.4" fill="none" stroke="#111" stroke-width=".9"/></svg></button>
            <button aria-label="Cura"><svg viewBox="0 0 10 10"><path d="M0 2l2-2h8v8l-2 2H0z" fill="#13a9e6"/><path d="M8 2.500H4.500Q2.500 2.500 2.500 5t2 2.500H8" fill="none" stroke="#fff" stroke-width="1.500"/></svg></button>
            <button class="open" aria-label="Wondershare"><svg viewBox="0 0 10 10"><circle cx="5" cy="5" r="5" fill="#fff"/><path d="M2.500 3v2.500Q3.800 7.500 5 5.500V3v2.500Q6.300 7.500 7.500 5.500V3" fill="none" stroke="#2ba1d6"/></svg></button>
            <button class="open" aria-label="Green app"><svg viewBox="0 0 10 10"><rect width="10" height="10" rx="1" fill="#18a54a"/><path d="M3 2h1.500v2.500H3zM5.500 2H7v2.500H5.500zM3 5.500h1.500V8H3zM5.500 5.500H7V8H5.500z" fill="#fff"/></svg></button>
            <button class="open" aria-label="Document"><svg viewBox="0 0 10 10"><path d="M1.500 0h5l2 2v8h-7z" fill="#fff"/><path d="M6.500 0v2h2" fill="#bbb"/></svg></button>
            <button class="open focused" aria-label="Fusion 360"><svg viewBox="0 0 10 10"><path d="M0 1l1-1h9v8l-2 2H0z" fill="#c84a08"/><path d="M2 0h8v7H2z" fill="#f58120"/><path d="M4.500 6V2H8M4.500 4h2.500" fill="none" stroke="#fff"/></svg></button>
        </div>
        <div class="tray">
            <button aria-label="Hidden icons"><svg viewBox="0 0 8 8"><path d="M1.500 5.500L4 3l2.500 2.500"/></svg></button>
            <button aria-label="Network"><svg viewBox="0 0 8 8"><path d="M2 1.500h5.500v4H2zM1 1v6h2M4 7.200h3"/></svg></button>
            <button aria-label="Volume"><svg viewBox="0 0 8 8"><path d="M.5 3h1.300L3.500 1.200v5.600L1.800 5H.5zM5 2.700q1 1.300 0 2.600M6.200 1.500q2 2.500 0 5"/></svg></button>
            <button class="spaced" aria-label="Pen"><svg viewBox="0 0 8 8"><path d="M1 5l2 2M2 5.500L6 1l1.500 1L3.500 6.500zM.5 6.500q1-2 3-2"/></svg></button>
            <button class="spaced" aria-label="Touch keyboard"><svg viewBox="0 0 8 8"><path d="M.8 1.500h6.500v5H.8zM.8 4h6.500M3 5.300h2"/></svg></button>
            <span class="lang">SLK</span>
            <time datetime="2023-06-02T09:58">9:58<br>2. 6. 2023</time>
        </div>
    </div>
</body>
</html>
```
FILE: styles.css
```css
* {
    box-sizing: border-box;
}
body {
    margin: 0;
    height: 100vh;
    display: flex;
    flex-direction: column;
    overflow: hidden;
    background: #fff;
    color: #333;
    font: 5px/6px "Liberation Sans", Arial, sans-serif;
}
svg {
    display: block;
    width: 8px;
    height: 8px;
    flex: none;
}
button {
    display: flex;
    align-items: center;
    margin: 0;
    padding: 0;
    border: 0;
    background: none;
    color: inherit;
    font: inherit;
    cursor: pointer;
}
a {
    color: inherit;
    text-decoration: none;
}
h1, h2 {
    margin: 0;
    font: inherit;
}
.drop::after {
    content: "";
    margin-left: 2px;
    border: 1px solid transparent;
    border-top: 2px solid #444;
    border-bottom: 0;
}
.desktop {
    flex: 1;
    display: flex;
    min-height: 0;
}
.app {
    flex: 1;
    display: flex;
    flex-direction: column;
    min-width: 0;
    border-right: 1px solid #999;
}

/* title bar */
.titlebar {
    display: flex;
    align-items: center;
    gap: 2px;
    height: 13px;
    padding-left: 3px;
    color: #111;
    font-family: "Open Sans", sans-serif;
}
.app-logo {
    width: 7px;
}
.window-buttons {
    display: flex;
    gap: 13px;
    margin-left: auto;
    padding-right: 7px;
}
.window-buttons svg, .doc-tab button svg {
    width: 6px;
    height: 6px;
    fill: none;
    stroke: #444;
    stroke-width: 0.7;
}

/* document tabs */
.doc-bar {
    display: flex;
    height: 14px;
    background: #c8c8c8;
}
.quick {
    display: flex;
    align-items: center;
    justify-content: space-between;
    width: 83px;
    padding: 0 5px 0 2px;
}
.quick .drop::after {
    border-top-color: #666;
}
.home {
    display: flex;
    align-items: center;
    justify-content: center;
    width: 17px;
    background: #b5b5b5;
}
.doc-tab {
    flex: 1;
    display: flex;
    align-items: center;
    padding-right: 3px;
    background: #bababa;
    color: #666;
}
.doc-tab a {
    flex: 1;
    display: flex;
    align-items: center;
    justify-content: center;
    gap: 2px;
}
.doc-tab a svg {
    width: 7px;
}
.current {
    background: #f0f0f0;
    color: #222;
    border-left: 1px solid #aaa;
}
.add-tab {
    width: 13px;
    justify-content: center;
    background: #b5b5b5;
}
.doc-tools {
    display: flex;
    align-items: center;
    gap: 6px;
    padding: 0 5px 0 5px;
}
.doc-tools button:last-child svg {
    width: 10px;
    height: 10px;
}

/* ribbon */
.ribbon {
    display: flex;
    gap: 4px;
    height: 35px;
    padding-left: 4px;
    background: #f1f1f1;
    border-bottom: 1px solid #ddd;
    font-family: Roboto, sans-serif;
}
.workspace {
    justify-content: center;
    width: 47px;
    height: 27px;
    margin-top: 4px;
    border: 1px solid #ddd;
    border-radius: 2px;
    background: #f4f4f4;
    font-weight: bold;
}
.ribbon-tabs {
    display: flex;
    gap: 18px;
    padding-left: 9px;
}
.ribbon-tabs a {
    height: 9px;
    padding-top: 1px;
}
.ribbon-tabs .active {
    margin: 0 -5px;
    padding: 1px 5px 0;
    border-bottom: 1px solid #0696d7;
    color: #0696d7;
    font-weight: bold;
}
.groups {
    display: flex;
}
.group {
    display: flex;
    flex-direction: column;
    align-items: center;
    justify-content: space-between;
    height: 24px;
    padding: 0 4px;
    border-right: 1px solid #ddd;
}
.group:first-child {
    padding-left: 2px;
}
.group:last-child {
    border: 0;
}
.tools {
    display: flex;
    align-items: center;
    gap: 4px;
    height: 18px;
    padding: 0 1px;
}
.tools svg {
    width: 14px;
    height: 14px;
}
.tools .select-tool svg {
    width: 16px;
    height: 16px;
}
.select-tool {
    background: #0696d7;
}

/* canvas */
.canvas {
    position: relative;
    flex: 1;
    display: flex;
    min-height: 0;
    padding: 3px 0 2px 1px;
}
.model {
    position: absolute;
    left: 280px;
    top: 16px;
    width: 275px;
    height: 306px;
}
.lettering {
    font-family: "DejaVu Sans", sans-serif;
    font-weight: bold;
    fill: #747684;
    stroke-width: 0.7;
}
.line-one {
    font-size: 15px;
}
.line-two {
    font-size: 14px;
}
.big {
    font-size: 24px;
    fill: #a1a4b6;
    stroke-width: 1.4;
}
.view-cube {
    position: absolute;
    right: 1px;
    top: 12px;
    width: 44px;
    height: 38px;
}
.cube-face {
    font-size: 6px;
    fill: #777;
}
.cube-small {
    font-size: 4px;
    fill: #999;
}
.axis-x {
    fill: #f2aaa9;
}
.axis-y {
    fill: #60dc6b;
}
.axis-z {
    font-size: 6px;
    fill: #8080f0;
}
.side {
    display: flex;
    flex-direction: column;
    justify-content: space-between;
    width: 129px;
}
.panel-head {
    display: flex;
    align-items: center;
    gap: 2px;
    height: 10px;
    padding: 0 5px 0 2px;
    background: #f0f0f0;
    border: 1px solid #e6e6e6;
    color: #666;
    font-family: Roboto, sans-serif;
}
.panel-head span {
    font-size: 4px;
    color: #222;
}
.comments {
    padding-left: 9px;
}
.dot {
    width: 4px;
    height: 4px;
    margin-left: auto;
    border-radius: 50%;
    background: #333;
}
.tree {
    display: flex;
    flex-direction: column;
    justify-content: space-between;
    height: 71px;
    margin: 2px 0 0;
    padding: 0;
    list-style: none;
}
.tree li {
    display: flex;
    align-items: center;
    gap: 5px;
    height: 9px;
    padding-left: 15px;
}
.tree .root {
    gap: 2px;
    padding-left: 7px;
}
.item {
    display: flex;
    align-items: center;
    gap: 3px;
    height: 8px;
    padding: 0 4px 0 0;
    background: #f3f3f3;
}
.item svg {
    margin-right: 1px;
}
.root .item {
    gap: 2px;
    padding: 0;
}
.doc-name {
    display: flex;
    align-items: center;
    gap: 4px;
    height: 7px;
    padding-right: 2px;
    background: #999;
    color: #fff;
    font-weight: bold;
}
.eye {
    height: 6px;
    fill: #ddd;
    stroke: #777;
    stroke-width: 0.8;
}
.off {
    opacity: 0.5;
}
.expand svg {
    width: 4px;
    height: 7px;
    fill: #fff;
    stroke: #333;
    stroke-width: 0.8;
}
.corner {
    border: 3px solid #555;
    border-top-color: transparent;
    border-left-color: transparent;
}
.root input {
    appearance: none;
    width: 6px;
    height: 6px;
    margin: 0;
    border: 1px solid #666;
    border-radius: 50%;
    background: radial-gradient(#222 1px, #fff 1px);
}
.nav-bar {
    position: absolute;
    left: 50%;
    bottom: 3px;
    display: flex;
    align-items: center;
    gap: 3px;
    height: 10px;
    padding: 0 1px;
    background: #f0f0f0;
    transform: translateX(-50%);
}
.nav-bar .drop::after {
    margin-left: 1px;
}

/* timeline */
.timeline {
    display: flex;
    align-items: center;
    gap: 6px;
    height: 20px;
    padding: 0 5px 0 2px;
    border-top: 1px solid #ddd;
    background: #f0f0f0;
}
.playback {
    display: flex;
    gap: 3px;
    fill: #333;
}
.features {
    width: 38px;
    height: 16px;
}
.settings {
    margin-left: auto;
}
.settings svg {
    width: 7px;
}
.behind {
    display: flex;
    flex-direction: column;
    gap: 12px;
    width: 3px;
    padding-top: 7px;
    background: #f6f6f6;
}
.behind i {
    height: 11px;
    background: #d3dcec;
}
.behind .red {
    height: 5px;
    margin-top: 18px;
    background: #d33b3b;
}
.behind .green {
    height: 3px;
    background: #4a9d4a;
}

/* taskbar */
.taskbar {
    display: flex;
    height: 17px;
    background: #1b1b1b;
    color: #eee;
    font-family: "Open Sans", sans-serif;
}
.start {
    padding-left: 5px;
}
.apps {
    display: flex;
    gap: 1px;
    margin-left: 37%;
}
.apps button {
    justify-content: center;
    width: 20px;
    border-bottom: 1px solid transparent;
}
.apps svg {
    width: 10px;
    height: 10px;
}
.apps .open {
    border-color: #76b9ed;
}
.apps .focused {
    background: #484848;
}
.tray {
    display: flex;
    align-items: center;
    gap: 5px;
    margin-left: auto;
    padding-right: 6px;
}
.tray svg {
    fill: none;
    stroke: #ddd;
    stroke-width: 0.8;
}
.spaced {
    margin-left: 3px;
}
.lang {
    margin-left: 4px;
}
.tray time {
    line-height: 8px;
    text-align: center;
}
```
